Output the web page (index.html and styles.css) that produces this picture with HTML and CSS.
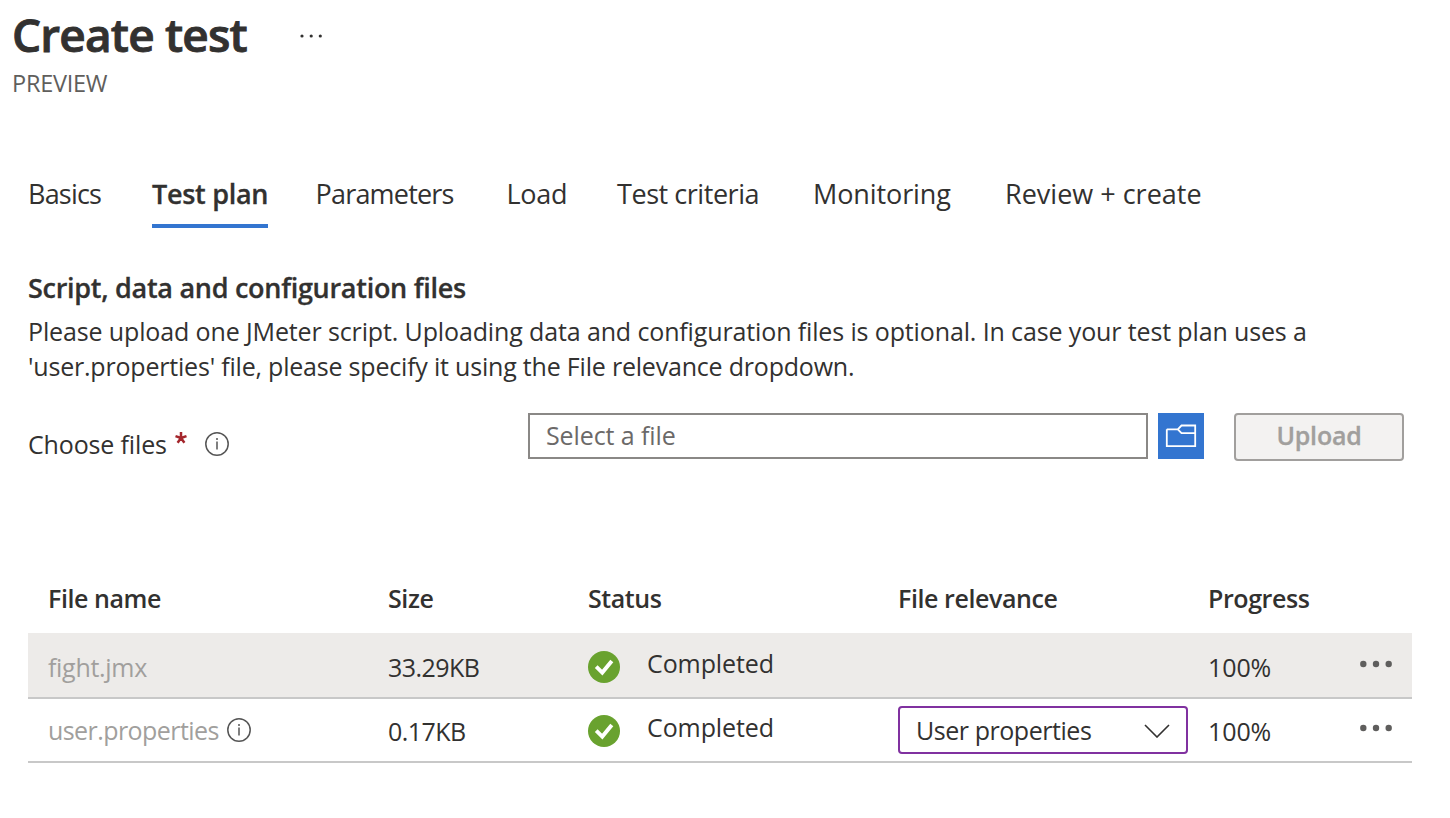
FILE: index.html
```html
<!DOCTYPE html>
<html lang="en">
<head>
<meta charset="utf-8">
<title>Create test</title>
<link rel="stylesheet" href="styles.css">
</head>
<body>
<svg class="symbols" aria-hidden="true">
  <symbol id="info" viewBox="0 0 24 24"><circle cx="12" cy="12" r="11.2" fill="none" stroke="#555" stroke-width="1.5"/><path d="M12 9.6V17.6" stroke="#555" stroke-width="1.5"/><circle cx="12" cy="6.9" r="1" fill="#555"/></symbol>
  <symbol id="check" viewBox="0 0 32 32"><circle cx="16" cy="16" r="16" fill="#69a22f"/><path d="M8.2 15.6L14.3 21.6L23.8 10" fill="none" stroke="#fff" stroke-width="3.9"/></symbol>
  <symbol id="more" viewBox="0 0 34 8"><g fill="#5f5e5d"><circle cx="3.3" cy="4" r="3.2"/><circle cx="16" cy="4" r="3.2"/><circle cx="28.7" cy="4" r="3.2"/></g></symbol>
</svg>
<header class="page-header">
  <div class="title-row">
    <h1 class="title">Create test</h1>
    <svg class="title-more" viewBox="0 0 24 4"><g fill="#323130"><circle cx="2" cy="2" r="1.6"/><circle cx="11.2" cy="2" r="1.6"/><circle cx="20.3" cy="2" r="1.6"/></g></svg>
  </div>
  <div class="subtitle">PREVIEW</div>
</header>
<nav class="tabs">
  <a class="tab tight">Basics</a>
  <a class="tab active">Test plan</a>
  <a class="tab tight">Parameters</a>
  <a class="tab">Load</a>
  <a class="tab criteria">Test criteria</a>
  <a class="tab loose">Monitoring</a>
  <a class="tab looser">Review + create</a>
</nav>
<main class="content">
  <h2 class="section-title">Script, data and configuration files</h2>
  <p class="description">Please upload one JMeter script. Uploading data and configuration files is optional. In case your test plan uses a<br><span class="line-two">'user.properties' file, please specify it using the File relevance dropdown.</span></p>
  <div class="upload-row">
    <div class="label"><span>Choose files</span><svg class="required" viewBox="0 0 12 12"><path d="M6 6V0M6 6L.5 4.1M6 6L11.5 4.1M6 6L2.6 10.8M6 6L9.4 10.8" stroke="#a4262c" stroke-width="2.5"/></svg><svg class="info"><use href="#info"/></svg></div>
    <div class="file-input">Select a file</div>
    <button class="browse" aria-label="Browse"><svg viewBox="0 0 32 24"><path d="M1.8 5.3H12.8L16.5 1.5H30.2V22.2H1.8V5.3M12.8 5.3L16.5 9.2H30.2" fill="none" stroke="#fff" stroke-width="1.8"/></svg></button>
    <button class="upload">Upload</button>
  </div>
  <section class="table">
    <div class="row head"><span>File name</span><span>Size</span><span>Status</span><span>File relevance</span><span>Progress</span></div>
    <div class="row selected">
      <span class="name jmx">fight.jmx</span><span class="size">33.29KB</span>
      <span class="status"><svg class="check"><use href="#check"/></svg><span class="status-text">Completed</span></span>
      <span></span><span class="percent">100%</span><svg class="more"><use href="#more"/></svg>
    </div>
    <div class="row">
      <span class="name props">user.properties<svg class="info"><use href="#info"/></svg></span><span class="size">0.17KB</span>
      <span class="status"><svg class="check"><use href="#check"/></svg><span class="status-text">Completed</span></span>
      <span class="select">User properties<svg class="chevron" viewBox="0 0 26 14"><path d="M1 1L13 13L25 1" fill="none" stroke="#323130" stroke-width="1.6"/></svg></span><span class="percent">100%</span><svg class="more"><use href="#more"/></svg>
    </div>
  </section>
</main>
</body>
</html>
```
FILE: styles.css
```css
* { box-sizing: border-box; }
body { margin: 0; background: #fff; color: #323130; font: 25px/35px "Open Sans", "Noto Sans", sans-serif; white-space: nowrap; letter-spacing: -0.3px; }
h1, h2, p { margin: 0; }
svg { flex: none; display: block; }
.symbols { width: 0; height: 0; position: absolute; }
.page-header { padding: 4px 0 0 12px; height: 175px; }
.title-row { display: flex; height: 60px; }
.title { font-size: 46px; line-height: 60px; font-weight: 600; letter-spacing: -0.85px; -webkit-text-stroke: 0.9px #323130; width: 288px; }
.title-more { width: 24px; height: 4px; margin-top: 30px; }
.subtitle { margin-top: 4px; font-size: 23.5px; line-height: 30px; color: #605e5c; letter-spacing: -0.25px; }
.tabs { display: grid; grid-template-columns: 124px 163.5px 191px 110.5px 196px 192px auto; padding-left: 28px; height: 53px; }
.tab { font-size: 27px; line-height: 36px; height: 53px; padding-top: 1px; justify-self: start; }
.tight { letter-spacing: -0.8px; }
.criteria { letter-spacing: -0.45px; }
.loose { letter-spacing: -0.1px; }
.looser { letter-spacing: 0; }
.active { width: 116px; border-bottom: 4px solid #3375d0; font-weight: 600; -webkit-text-stroke: 0.3px #323130; }
.content { padding: 42px 0 0 28px; }
.section-title { font-size: 27px; line-height: 36px; font-weight: 600; letter-spacing: -0.28px; -webkit-text-stroke: 0.3px #323130; }
.description { margin-top: 8px; letter-spacing: -0.13px; }
.line-two { letter-spacing: -0.2px; }
.upload-row { display: flex; align-items: flex-start; height: 48px; margin-top: 29px; }
.label { display: flex; width: 500px; padding-top: 14px; letter-spacing: -0.15px; }
.required { width: 12px; height: 12px; margin: 5px 0 0 8px; }
.info { width: 24px; height: 24px; }
.label .info { margin: 5px 0 0 18px; }
.file-input { width: 620px; height: 46px; border: 2px solid #8a8886; padding: 3px 16px; color: #6b6968; letter-spacing: -0.1px; }
.browse { width: 46px; height: 46px; margin-left: 10px; padding: 11px 7px; border: 0; background: #3375d0; }
.browse svg { width: 32px; height: 24px; }
.upload { width: 170px; height: 48px; margin-left: 30px; padding: 0 0 3px; border: 2px solid #a19f9d; border-radius: 4px; background: #f3f2f1; color: #a19f9d; font: 600 25px/35px "Open Sans", sans-serif; letter-spacing: -0.2px; -webkit-text-stroke: 0.3px #a19f9d; }
.table { width: 1384px; margin-top: 119px; }
.row { display: grid; grid-template-columns: 340px 200px 310px 310px 152px auto; height: 64px; padding: 15px 0 0 20px; border-bottom: 2px solid #c8c8c8; }
.head { height: 53px; padding-top: 1px; border: 0; font-weight: 600; letter-spacing: -0.42px; }
.selected { height: 66px; padding-top: 17px; background: #edebe9; }
.name { display: flex; color: #a19f9d; letter-spacing: -0.57px; }
.jmx { letter-spacing: -0.3px; }
.props { margin-top: -1px; }
.name .info { margin: 5px 0 0 8px; }
.size { letter-spacing: -0.55px; }
.percent { letter-spacing: -0.1px; }
.status { display: flex; gap: 27px; }
.check { width: 32px; height: 32px; margin-top: 1px; }
.status-text { margin-top: -4px; letter-spacing: -0.1px; }
.select { display: flex; justify-content: space-between; width: 290px; height: 48px; margin-top: -8px; padding: 5px 16px; border: 2px solid #8031a0; border-radius: 4px; letter-spacing: -0.45px; }
.chevron { width: 26px; height: 14px; margin-top: 11px; }
.more { width: 34px; height: 8px; margin-top: 10px; }
```
